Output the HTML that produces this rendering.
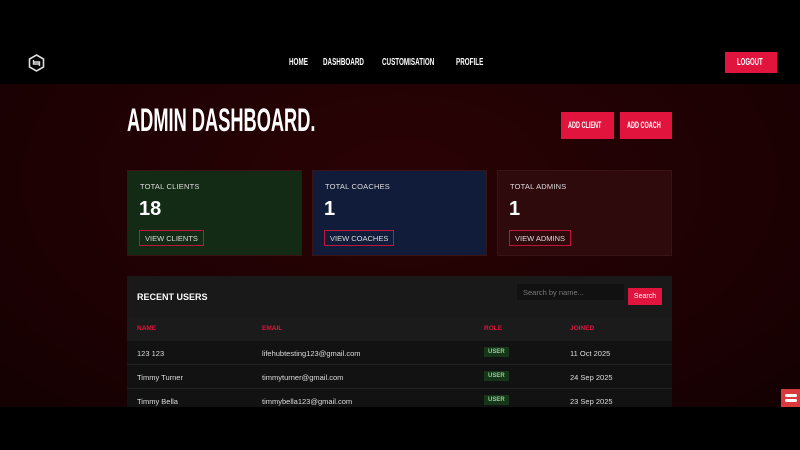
<!DOCTYPE html>
<html><head><style>
*{margin:0;padding:0;box-sizing:border-box}
body{width:800px;height:450px;background:#000;font-family:"Liberation Sans",sans-serif;position:relative;overflow:hidden;color:#fff}
.c{font-weight:bold;white-space:nowrap;display:inline-block;transform:scaleX(0.6);transform-origin:left center}
.abs{position:absolute;white-space:nowrap}
.main{left:0;top:84px;width:800px;height:323px;background:radial-gradient(ellipse at 50% 30%,#2a0205 0%,#1c0103 70%,#140102 100%)}
.nav{top:56px;font-size:10.5px}
.btn{background:#e0143c}
.bt{font-size:10px;color:#fff}
.card{top:170px;width:175px;height:86px;border:1px solid #3a1414}
.card .l{position:absolute;left:12px;top:11px;font-size:7.5px;color:#ddd;letter-spacing:.2px}
.card .n{position:absolute;left:11px;top:27px;font-size:20px;font-weight:bold}
.card .b{position:absolute;left:11px;top:59px;height:16px;border:1px solid #c0143a;font-size:7.5px;color:#ddd;padding:3px 5px 0}
.row{left:127px;width:545px;height:24px;font-size:7.5px;color:#ddd}
.row span{position:absolute;top:8px}
.tag{background:#16361a;color:#8fd08f;font-size:6px;font-weight:bold;padding:2px 4px;top:6px!important}
</style></head><body>
<div class="abs main"></div>
<svg class="abs" style="left:28px;top:54px" width="17" height="18" viewBox="0 0 17 18"><path d="M8.5 1L15.5 5V13L8.5 17L1.5 13V5Z" fill="none" stroke="#ddd" stroke-width="1.6"/><path d="M5.5 6V10H11.5M11.5 12V8H5.5" fill="none" stroke="#ddd" stroke-width="1.4"/></svg>
<div class="abs nav" style="left:289px"><span class="c">HOME</span></div>
<div class="abs nav" style="left:323px"><span class="c">DASHBOARD</span></div>
<div class="abs nav" style="left:382px"><span class="c">CUSTOMISATION</span></div>
<div class="abs nav" style="left:456px"><span class="c">PROFILE</span></div>
<div class="abs btn" style="left:725px;top:52px;width:52px;height:21px"></div>
<div class="abs bt" style="left:737px;top:57px"><span class="c">LOGOUT</span></div>
<div class="abs" style="left:127px;top:102px;font-size:32px"><span class="c" style="transform:scaleX(0.57)">ADMIN DASHBOARD.</span></div>
<div class="abs btn" style="left:561px;top:112px;width:53px;height:27px"></div>
<div class="abs bt" style="left:568px;top:120px;font-size:9.5px"><span class="c" style="transform:scaleX(0.58)">ADD CLIENT</span></div>
<div class="abs btn" style="left:620px;top:112px;width:52px;height:27px"></div>
<div class="abs bt" style="left:627px;top:120px;font-size:9.5px"><span class="c" style="transform:scaleX(0.58)">ADD COACH</span></div>
<div class="abs card" style="left:127px;background:#132a15"><div class="l">TOTAL CLIENTS</div><div class="n">18</div><div class="b">VIEW CLIENTS</div></div>
<div class="abs card" style="left:312px;background:#111c3a"><div class="l">TOTAL COACHES</div><div class="n">1</div><div class="b">VIEW COACHES</div></div>
<div class="abs card" style="left:497px;background:#2e0a0c"><div class="l">TOTAL ADMINS</div><div class="n">1</div><div class="b">VIEW ADMINS</div></div>
<div class="abs" style="left:127px;top:276px;width:545px;height:131px;background:#191919"></div>
<div class="abs" style="left:137px;top:292px;font-size:9px;font-weight:bold">RECENT USERS</div>
<div class="abs" style="left:517px;top:284px;width:107px;height:16px;background:#111;font-size:7.5px;color:#777;padding:4px 6px">Search by name...</div>
<div class="abs btn" style="left:628px;top:288px;width:34px;height:17px;line-height:17px;font-size:7px;text-align:center">Search</div>
<div class="abs row" style="top:317px;background:#1b1b1b;color:#e0143c;font-weight:bold;font-size:6.5px"><span style="left:10px">NAME</span><span style="left:135px">EMAIL</span><span style="left:357px">ROLE</span><span style="left:443px">JOINED</span></div>
<div class="abs row" style="top:341px;background:#121212;border-bottom:1px solid #222"><span style="left:10px">123 123</span><span style="left:135px">lifehubtesting123@gmail.com</span><span class="tag" style="left:357px">USER</span><span style="left:443px">11 Oct 2025</span></div>
<div class="abs row" style="top:365px;background:#121212;border-bottom:1px solid #222"><span style="left:10px">Timmy Turner</span><span style="left:135px">timmyturner@gmail.com</span><span class="tag" style="left:357px">USER</span><span style="left:443px">24 Sep 2025</span></div>
<div class="abs row" style="top:389px;height:18px;background:#121212"><span style="left:10px">Timmy Bella</span><span style="left:135px">timmybella123@gmail.com</span><span class="tag" style="left:357px">USER</span><span style="left:443px">23 Sep 2025</span></div>
<div class="abs" style="left:781px;top:389px;width:19px;height:18px;background:#d9383c"><div style="position:absolute;left:4px;top:5px;width:12px;height:3px;background:#fff;border-radius:2px"></div><div style="position:absolute;left:4px;top:10px;width:12px;height:3px;background:#fff;border-radius:2px"></div></div>
</body></html>
